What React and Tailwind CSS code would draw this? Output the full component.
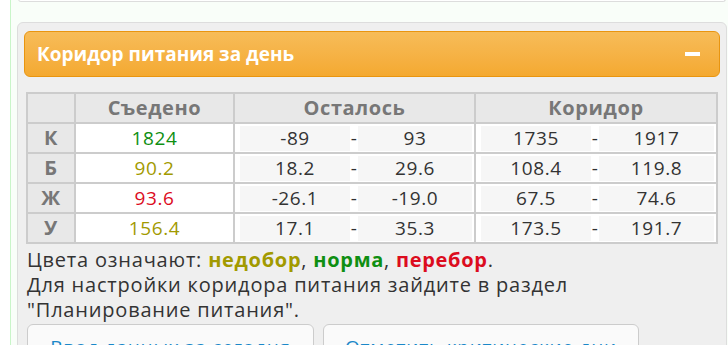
import React from 'react';

const rows = [
  { label: 'К', eaten: '1824', color: 'text-[#0f8f12]', left: ['-89', '93'], range: ['1735', '1917'] },
  { label: 'Б', eaten: '90.2', color: 'text-[#a29a00]', left: ['18.2', '29.6'], range: ['108.4', '119.8'] },
  { label: 'Ж', eaten: '93.6', color: 'text-[#dc0c1e]', left: ['-26.1', '-19.0'], range: ['67.5', '74.6'] },
  { label: 'У', eaten: '156.4', color: 'text-[#a29a00]', left: ['17.1', '35.3'], range: ['173.5', '191.7'] },
];

const cell = 'border-2 border-[#cccccc] p-0';

function Range({ values }) {
  return (
    <div className="flex items-center pl-[5px] pr-[2px] h-[28px]">
      <div className="w-[110px] h-[25px] bg-[#f6f6f6] flex items-center justify-center">{values[0]}</div>
      <div className="w-[8px] text-center">-</div>
      <div className="flex-1 h-[25px] bg-[#f6f6f6] flex items-center justify-center">{values[1]}</div>
    </div>
  );
}

function App() {
  return (
    <div className="w-[728px] h-[345px] overflow-hidden bg-white flex font-['Open_Sans',sans-serif]">
      <div className="w-[10px] shrink-0" />
      <div className="flex-1 border-l border-[#c9f5c9] bg-[#f9fef9] pl-[6px] pr-[2px]">
        {/* верхняя карточка */}
        <div className="h-[3px] -mt-[1px] ml-[1px] mr-[1px] border border-t-0 border-[#dddddd] rounded-b-[6px] bg-white" />

        {/* панель коридора */}
        <div className="mt-[20px] h-[340px] rounded-[6px] border border-[#dddddd] bg-[#efefef] px-[6px] pt-[8px]">
          <div className="h-[46px] rounded-[6px] border border-[#e9950f] bg-gradient-to-b from-[#f7bc58] to-[#f4a930] flex items-center justify-between pl-[12px] pr-[19px]">
            <span className="text-white font-bold text-[19px]">Коридор питания за день</span>
            <span className="w-[15px] h-[4px] bg-white" />
          </div>

          <table className="mt-[15px] mx-[2px] w-[690px] border-collapse border-2 border-[#cccccc] text-[19px] leading-[28px] tracking-[0.6px] text-[#333333] table-fixed">
            <colgroup>
              <col className="w-[48px]" />
              <col className="w-[159px]" />
              <col className="w-[241px]" />
              <col className="w-[242px]" />
            </colgroup>
            <thead>
              <tr className="bg-[#e8e8e8] text-[#777777] text-[20px]">
                <th className={cell}><div className="h-[28px]" /></th>
                <th className={`${cell} font-bold`}><div className="h-[28px] leading-[28px]">Съедено</div></th>
                <th className={`${cell} font-bold`}><div className="h-[28px] leading-[28px]">Осталось</div></th>
                <th className={`${cell} font-bold`}><div className="h-[28px] leading-[28px]">Коридор</div></th>
              </tr>
            </thead>
            <tbody>
              {rows.map((r) => (
                <tr key={r.label}>
                  <td className={`${cell} bg-[#e8e8e8] text-[#777777] font-bold text-[20px] text-center`}>
                    <div className="h-[28px] leading-[28px]">{r.label}</div>
                  </td>
                  <td className={`${cell} bg-white text-center font-medium ${r.color}`}>
                    <div className="h-[28px] leading-[28px]">{r.eaten}</div>
                  </td>
                  <td className={`${cell} bg-white`}><Range values={r.left} /></td>
                  <td className={`${cell} bg-white`}><Range values={r.range} /></td>
                </tr>
              ))}
            </tbody>
          </table>

          <div className="mt-[3px] ml-[3px] text-[20px] leading-[25px] tracking-[0.8px] text-[#333333]">
            <p>
              Цвета означают: <span className="font-bold tracking-[0.7px] text-[#a29a00]">недобор</span>,{' '}
              <span className="font-bold tracking-[0.7px] text-[#0f8f12]">норма</span>,{' '}
              <span className="font-bold tracking-[0.7px] text-[#dc0c1e]">перебор</span>.
            </p>
            <p>Для настройки коридора питания зайдите в раздел</p>
            <p>"Планирование питания".</p>
          </div>

          <div className="mt-[2px] ml-[3px] flex gap-[9px]">
            <div className="w-[287px] h-[40px] rounded-[6px] border border-[#cccccc] bg-[#fafafa] pt-[8px] text-center text-[#1a88c9] text-[19px] tracking-[0.8px]">
              Ввод данных за сегодня
            </div>
            <div className="w-[316px] h-[40px] rounded-[6px] border border-[#cccccc] bg-[#fafafa] pt-[8px] text-center text-[#1a88c9] text-[19px] tracking-[0.8px]">
              Отметить критические дни
            </div>
          </div>
        </div>
      </div>
    </div>
  );
}

export default App;
